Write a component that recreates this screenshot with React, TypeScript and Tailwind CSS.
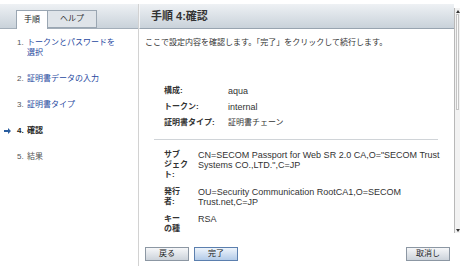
import React from "react";

const steps = [
  { num: "1.", label: "トークンとパスワードを選択", kind: "link" },
  { num: "2.", label: "証明書データの入力", kind: "link" },
  { num: "3.", label: "証明書タイプ", kind: "link" },
  { num: "4.", label: "確認", kind: "current" },
  { num: "5.", label: "結果", kind: "plain" },
];

const summary = [
  { label: "構成:", value: "aqua", latin: true },
  { label: "トークン:", value: "internal", latin: true },
  { label: "証明書タイプ:", value: "証明書チェーン", latin: false },
];

const details = [
  {
    label: ["サブ", "ジェク", "ト:"],
    value: 'CN=SECOM Passport for Web SR 2.0 CA,O="SECOM Trust Systems CO.,LTD.",C=JP',
  },
  {
    label: ["発行", "者:"],
    value: "OU=Security Communication RootCA1,O=SECOM Trust.net,C=JP",
  },
  {
    label: ["キー", "の種"],
    value: "RSA",
  },
];

export default function App() {
  return (
    <div className="w-[460px] h-[266px] bg-white pt-[4px] flex font-['Liberation_Sans','Noto_Sans_CJK_JP',sans-serif] text-[#333] overflow-hidden">
      {/* Left: tabs + step list */}
      <div className="w-[139px] shrink-0 border-r border-[#d2d2d2] flex flex-col">
        <div className="h-[25px] flex items-end pl-[16px] bg-gradient-to-b from-[#eef1f4] to-[#c9d2da] border-b border-[#a3aeb9]">
          <div className="h-[19px] w-[32px] -mb-px bg-white border border-b-0 border-[#9aa6b2] flex items-center justify-center text-[8px] text-[#222]">
            手順
          </div>
          <div className="h-[18px] w-[49px] bg-[#dfe4e9] border border-l-0 border-[#9aa6b2] flex items-center justify-center text-[8px] text-[#333]">
            ヘルプ
          </div>
        </div>
        <div className="flex flex-col gap-[16px] pt-[9px]">
          {steps.map((s) => (
            <StepItem key={s.num} {...s} />
          ))}
        </div>
      </div>

      {/* Right: wizard page */}
      <div className="flex-1 flex flex-col">
        <div className="h-[229px] flex">
          <div className="flex-1 flex flex-col min-w-0">
            <div className="h-[25px] shrink-0 flex items-center pl-[11px] bg-gradient-to-b from-[#eef1f4] to-[#c9d2da] border-b border-[#98a4b0] border-l border-l-[#f4f6f8]">
              <span className="text-[11px] font-bold text-[#333]">手順 4:確認</span>
            </div>
            <div className="flex-1 overflow-hidden">
              <p className="pl-[6px] pt-[8px] text-[8px] leading-[12px]">
                ここで設定内容を確認します。「完了」をクリックして続行します。
              </p>
              <div className="mt-[34px] pl-[25px]">
                {summary.map((r) => (
                  <div key={r.label} className="flex leading-[16px]">
                    <span className="w-[64px] shrink-0 text-[8px] font-bold">{r.label}</span>
                    <span className={r.latin ? "text-[9px]" : "text-[8px]"}>{r.value}</span>
                  </div>
                ))}
              </div>
              <div className="mt-[8px] ml-[15px] mr-[16px] border-t border-[#d0d4d8]" />
              <div className="pt-[10px] pl-[25px] flex flex-col gap-[7px]">
                {details.map((r) => (
                  <div key={r.label.join("")} className="flex gap-[4px]">
                    <div className="w-[30px] shrink-0 text-[8px] font-bold leading-[10px]">
                      {r.label.map((l) => (
                        <div key={l}>{l}</div>
                      ))}
                    </div>
                    <div className="w-[250px] text-[9px] leading-[10px]">{r.value}</div>
                  </div>
                ))}
              </div>
            </div>
          </div>
          {/* scrollbar */}
          <div className="w-[6px] shrink-0 pt-[4px] flex flex-col">
            <div className="flex-1 bg-[#f2f2f2] border-l border-[#b8b8b8] flex flex-col">
              <div className="h-[6px] flex items-center justify-center">
                <div className="w-0 h-0 border-l-[2px] border-r-[2px] border-b-[3px] border-l-transparent border-r-transparent border-b-[#333]" />
              </div>
              <div className="h-[96px] mx-px bg-[#fafafa] border border-[#c4c4c4]" />
              <div className="flex-1" />
              <div className="h-[6px] flex items-center justify-center">
                <div className="w-0 h-0 border-l-[2px] border-r-[2px] border-t-[3px] border-l-transparent border-r-transparent border-t-[#333]" />
              </div>
            </div>
          </div>
        </div>
        <div className="flex items-start pt-[14px] pl-[6px] pr-[10px] gap-[5px]">
          <WizButton label="戻る" />
          <WizButton label="完了" primary />
          <div className="flex-1" />
          <WizButton label="取消し" />
        </div>
      </div>
    </div>
  );
}

function StepItem({ num, label, kind }: { num: string; label: string; kind: string }) {
  return (
    <div className="relative flex text-[8px] leading-[10px]">
      {kind === "current" && (
        <svg className="absolute left-[4px] top-[2px]" width="7" height="6" viewBox="0 0 7 6">
          <path d="M0 2h4V0l3 3-3 3V4H0z" fill="#2a5d9f" />
        </svg>
      )}
      <span className={`pl-[17px] w-[27px] shrink-0 ${kind === "current" ? "font-bold text-[#222]" : "text-[#555]"}`}>
        {num}
      </span>
      <span
        className={`w-[92px] ${
          kind === "link" ? "text-[#1f49a0]" : kind === "current" ? "font-bold text-[#222]" : "text-[#555]"
        }`}
      >
        {label}
      </span>
    </div>
  );
}

function WizButton({ label, primary }: { label: string; primary?: boolean }) {
  return (
    <button
      className={`h-[14px] w-[44px] border text-[8px] leading-none text-[#222] ${
        primary
          ? "border-[#5b7fae] bg-gradient-to-b from-[#eef4fb] to-[#b3cbe8]"
          : "border-[#8c97a3] bg-gradient-to-b from-[#f6f7f9] to-[#ccd3db]"
      }`}
    >
      {label}
    </button>
  );
}
